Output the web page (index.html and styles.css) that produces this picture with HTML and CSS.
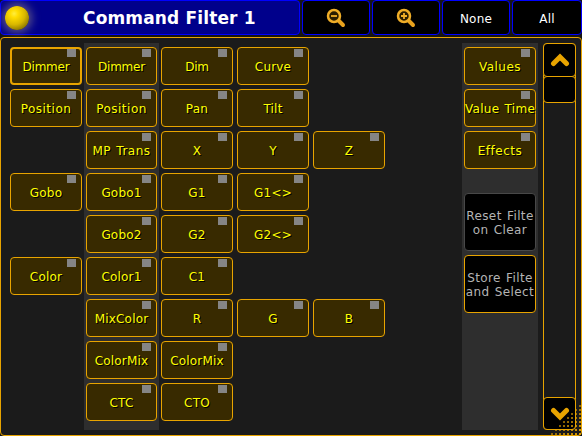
FILE: index.html
```html
<!DOCTYPE html>
<html lang="en">
<head>
<meta charset="utf-8">
<title>Command Filter 1</title>
<link rel="stylesheet" href="styles.css">
</head>
<body>
<header class="bar">
  <div class="title"><span class="ball"></span><h1>Command Filter 1</h1></div>
  <button class="top"><svg width="20" height="20" viewBox="0 0 20 20"><path class="handle" d="M12.5 12.5 17 17"/><circle class="lens" cx="8" cy="8" r="6"/><path class="sign" d="M5 8h6"/></svg></button>
  <button class="top"><svg width="20" height="20" viewBox="0 0 20 20"><path class="handle" d="M12.5 12.5 17 17"/><circle class="lens" cx="8" cy="8" r="6"/><path class="sign" d="M5 8h6M8 5v6"/></svg></button>
  <button class="top">None</button>
  <button class="top">All</button>
</header>
<main class="panel">
  <section class="col">
    <button class="key selected tight">Dimmer</button>
    <button class="key loose">Position</button>
    <span class="slot"></span>
    <button class="key">Gobo</button>
    <span class="slot"></span>
    <button class="key">Color</button>
  </section>
  <section class="col strip features">
    <button class="key tight">Dimmer</button>
    <button class="key loose">Position</button>
    <button class="key loose">MP Trans</button>
    <button class="key">Gobo1</button>
    <button class="key">Gobo2</button>
    <button class="key">Color1</button>
    <button class="key">MixColor</button>
    <button class="key">ColorMix</button>
    <button class="key">CTC</button>
  </section>
  <section class="col">
    <button class="key tight">Dim</button>
    <button class="key">Pan</button>
    <button class="key">X</button>
    <button class="key">G1</button>
    <button class="key">G2</button>
    <button class="key">C1</button>
    <button class="key">R</button>
    <button class="key">ColorMix</button>
    <button class="key">CTO</button>
  </section>
  <section class="col">
    <button class="key">Curve</button>
    <button class="key">Tilt</button>
    <button class="key">Y</button>
    <button class="key">G1&lt;&gt;</button>
    <button class="key">G2&lt;&gt;</button>
    <span class="slot"></span>
    <button class="key">G</button>
  </section>
  <section class="col">
    <span class="slot"></span>
    <span class="slot"></span>
    <button class="key">Z</button>
    <span class="slot"></span>
    <span class="slot"></span>
    <span class="slot"></span>
    <button class="key">B</button>
  </section>
  <section class="col strip layers">
    <button class="key loose">Values</button>
    <button class="key full">Value Time</button>
    <button class="key loose">Effects</button>
    <button class="action muted">Reset Filte<br>on Clear</button>
    <button class="action">Store Filte<br>and Select</button>
  </section>
  <aside class="scroll">
    <button class="arrow"><svg width="20" height="14" viewBox="0 0 20 14"><path d="M3.500 10.500 10 4l6.500 6.500"/></svg></button>
    <div class="thumb"></div>
    <button class="arrow down"><svg width="20" height="14" viewBox="0 0 20 14"><path d="M3.500 3.500 10 10l6.500-6.500"/></svg></button>
  </aside>
  <svg class="grip" width="32" height="32" viewBox="0 0 32 32">
    <defs><pattern id="dots" width="4" height="4" patternUnits="userSpaceOnUse"><rect x="1" y="1" width="2" height="2" fill="#e8a400"/></pattern>
    <linearGradient id="fade" x1="0.45" y1="0.45" x2="1" y2="1"><stop offset="0" stop-color="#888"/><stop offset="1" stop-color="#fff"/></linearGradient>
    <mask id="corner"><path d="M32 0v32H0v-4h4v-4h4v-4h4v-4h4v-4h4V8h4V4h4V0z" fill="url(#fade)"/></mask></defs>
    <rect width="32" height="32" fill="url(#dots)" mask="url(#corner)"/>
  </svg>
</main>
</body>
</html>
```

FILE: styles.css
```css
* { box-sizing: border-box; }
body {
  margin: 0;
  width: 582px;
  height: 436px;
  overflow: hidden;
  background: #151515;
  font-family: "DejaVu Sans", sans-serif;
  font-size: 12px;
}
button { margin: 0; padding: 0; font: inherit; letter-spacing: .2px; }
.bar {
  display: grid;
  grid-template-columns: 300px 68px 68px 68px 70px;
  column-gap: 2px;
  width: 582px;
  height: 35px;
  margin-bottom: 2px;
}
.title {
  display: flex;
  align-items: center;
  border: 1px solid #00f;
  border-radius: 4px;
  background: #00008b;
}
.ball {
  flex: none;
  width: 24px;
  height: 24px;
  margin: 0 0 0 4px;
  border-radius: 50%;
  background: radial-gradient(circle at 38% 32%, #ffee40 0, #ffdc00 18%, #d8b700 50%, #5e5000 95%);
  box-shadow: 0 0 8px 3px rgba(160, 145, 130, .55);
}
.title h1 {
  margin: 0;
  padding-left: 54px;
  font-size: 17px;
  line-height: 20px;
  letter-spacing: .15px;
  color: #fff;
  white-space: nowrap;
}
.top {
  display: flex;
  align-items: center;
  justify-content: center;
  border: 1px solid #00f;
  border-radius: 4px;
  background: #000;
  color: #fff;
  padding-top: 2px;
}
.top svg { margin-bottom: 2px; }
.handle { stroke: #e9a21d; stroke-width: 4; stroke-linecap: round; }
.lens { fill: #2a1c00; stroke: #f0ae28; stroke-width: 2.500; }
.sign { fill: none; stroke: #f0ae28; stroke-width: 1.800; }
.panel {
  position: relative;
  display: flex;
  height: 399px;
  padding: 5px 5px 5px 7px;
  border: 1px solid #e8a400;
  border-radius: 4px;
  background: #1b1b1b;
}
.col {
  display: flex;
  flex-direction: column;
  flex: none;
  gap: 4px;
  width: 76px;
  height: 387px;
  padding: 4px 2px;
}
.features { width: 75px; }
.strip { background: #2e2e2e; }
.layers { margin-left: 75px; }
.slot { height: 38px; flex: none; }
.key, .action {
  flex: none;
  width: 100%;
  border: 1px solid #e8a400;
  border-radius: 4px;
  white-space: nowrap;
}
.key {
  position: relative;
  height: 38px;
  padding-top: 2px;
  background: #382a00;
  color: #ff0;
  text-shadow: 1px 1px 0 #000;
}
.key::after {
  content: "";
  position: absolute;
  top: 1px;
  right: 5px;
  width: 9px;
  height: 8px;
  background: #858585;
}
.tight { letter-spacing: -.2px; }
.loose { letter-spacing: .5px; word-spacing: 1px; }
.full { letter-spacing: .3px; word-spacing: 1px; }
.selected { border-width: 2px; }
.selected::after { top: 0; right: 4px; }
.action {
  height: 58px;
  padding-top: 1px;
  background: #000;
  color: #b4b4b4;
  line-height: 14px;
  letter-spacing: .4px;
  word-spacing: 1px;
}
.muted { margin-top: 20px; border-color: #484848; }
.scroll {
  display: flex;
  flex-direction: column;
  width: 33px;
  height: 387px;
  margin-left: 5px;
  border: 1px solid #e8a400;
  border-radius: 4px;
}
.arrow, .thumb {
  width: 33px;
  margin-left: -1px;
  border: 1px solid #e8a400;
  border-radius: 4px;
  background: #000;
}
.arrow {
  display: flex;
  align-items: center;
  justify-content: center;
  height: 34px;
  margin-top: -1px;
}
.arrow path { fill: none; stroke: #e8a400; stroke-width: 5; stroke-linecap: round; }
.thumb { height: 27px; margin-top: -1px; }
.down { height: 33px; margin-top: auto; margin-bottom: -1px; }
.grip { position: absolute; right: -1px; bottom: -1px; }
```
